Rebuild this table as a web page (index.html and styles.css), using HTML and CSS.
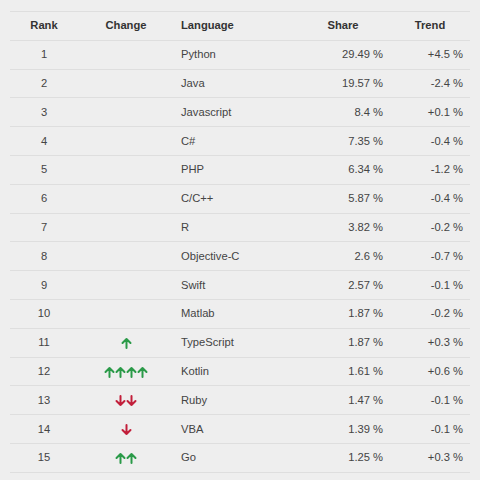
FILE: index.html
```html
<!DOCTYPE html>
<html>
<head>
<meta charset="utf-8">
<link rel="stylesheet" href="styles.css">
</head>
<body>
<svg width="0" height="0" class="defs">
  <defs>
    <g id="up"><path d="M5.5 11V2M1.5 6L5.5 2L9.5 6" fill="none" stroke-width="2" stroke-linecap="round" stroke-linejoin="round"/></g>
    <g id="down"><path d="M5.5 1V10M1.5 6L5.5 10L9.5 6" fill="none" stroke-width="2" stroke-linecap="round" stroke-linejoin="round"/></g>
  </defs>
</svg>
<table class="rank-table">
  <thead>
    <tr><th class="c-rank">Rank</th><th class="c-change">Change</th><th class="c-lang">Language</th><th class="c-share">Share</th><th class="c-trend">Trend</th></tr>
  </thead>
  <tbody>
    <tr><td class="c-rank">1</td><td class="c-change"></td><td class="c-lang">Python</td><td class="c-share">29.49 %</td><td class="c-trend">+4.5 %</td></tr>
    <tr><td class="c-rank">2</td><td class="c-change"></td><td class="c-lang">Java</td><td class="c-share">19.57 %</td><td class="c-trend">-2.4 %</td></tr>
    <tr><td class="c-rank">3</td><td class="c-change"></td><td class="c-lang">Javascript</td><td class="c-share">8.4 %</td><td class="c-trend">+0.1 %</td></tr>
    <tr><td class="c-rank">4</td><td class="c-change"></td><td class="c-lang">C#</td><td class="c-share">7.35 %</td><td class="c-trend">-0.4 %</td></tr>
    <tr><td class="c-rank">5</td><td class="c-change"></td><td class="c-lang">PHP</td><td class="c-share">6.34 %</td><td class="c-trend">-1.2 %</td></tr>
    <tr><td class="c-rank">6</td><td class="c-change"></td><td class="c-lang">C/C++</td><td class="c-share">5.87 %</td><td class="c-trend">-0.4 %</td></tr>
    <tr><td class="c-rank">7</td><td class="c-change"></td><td class="c-lang">R</td><td class="c-share">3.82 %</td><td class="c-trend">-0.2 %</td></tr>
    <tr><td class="c-rank">8</td><td class="c-change"></td><td class="c-lang">Objective-C</td><td class="c-share">2.6 %</td><td class="c-trend">-0.7 %</td></tr>
    <tr><td class="c-rank">9</td><td class="c-change"></td><td class="c-lang">Swift</td><td class="c-share">2.57 %</td><td class="c-trend">-0.1 %</td></tr>
    <tr><td class="c-rank">10</td><td class="c-change"></td><td class="c-lang">Matlab</td><td class="c-share">1.87 %</td><td class="c-trend">-0.2 %</td></tr>
    <tr><td class="c-rank">11</td><td class="c-change"><span class="arrows up"><svg viewBox="0 0 11 12"><use href="#up"/></svg></span></td><td class="c-lang">TypeScript</td><td class="c-share">1.87 %</td><td class="c-trend">+0.3 %</td></tr>
    <tr><td class="c-rank">12</td><td class="c-change"><span class="arrows up"><svg viewBox="0 0 11 12"><use href="#up"/></svg><svg viewBox="0 0 11 12"><use href="#up"/></svg><svg viewBox="0 0 11 12"><use href="#up"/></svg><svg viewBox="0 0 11 12"><use href="#up"/></svg></span></td><td class="c-lang">Kotlin</td><td class="c-share">1.61 %</td><td class="c-trend">+0.6 %</td></tr>
    <tr><td class="c-rank">13</td><td class="c-change"><span class="arrows down"><svg viewBox="0 0 11 12"><use href="#down"/></svg><svg viewBox="0 0 11 12"><use href="#down"/></svg></span></td><td class="c-lang">Ruby</td><td class="c-share">1.47 %</td><td class="c-trend">-0.1 %</td></tr>
    <tr><td class="c-rank">14</td><td class="c-change"><span class="arrows down"><svg viewBox="0 0 11 12"><use href="#down"/></svg></span></td><td class="c-lang">VBA</td><td class="c-share">1.39 %</td><td class="c-trend">-0.1 %</td></tr>
    <tr><td class="c-rank">15</td><td class="c-change"><span class="arrows up"><svg viewBox="0 0 11 12"><use href="#up"/></svg><svg viewBox="0 0 11 12"><use href="#up"/></svg></span></td><td class="c-lang">Go</td><td class="c-share">1.25 %</td><td class="c-trend">+0.3 %</td></tr>
  </tbody>
</table>
</body>
</html>
```
FILE: styles.css
```css
html, body {
  margin: 0;
  padding: 0;
  background: #eeeeee;
}
body {
  padding: 11px 10px 0 10px;
  font-family: "Liberation Sans", Arial, sans-serif;
  font-size: 11.2px;
  color: #444444;
}
.defs {
  position: absolute;
}
.rank-table {
  width: 460px;
  border-collapse: collapse;
  table-layout: fixed;
  border-top: 1px solid #dedede;
}
.rank-table th,
.rank-table td {
  height: 27.8px;
  padding: 0 7px;
  line-height: 15px;
  border-bottom: 1px solid #dedede;
  vertical-align: middle;
  white-space: nowrap;
}
.rank-table th {
  font-weight: bold;
  color: #333333;
  text-align: center;
}
.c-rank { width: 54px; text-align: center; }
.c-change { width: 82px; text-align: center; }
.c-lang { width: 108px; text-align: left; }
.c-share { width: 80px; text-align: right; }
.c-trend { width: 66px; text-align: right; }
.rank-table th.c-lang { text-align: left; }
.arrows {
  display: inline-flex;
  vertical-align: middle;
}
.arrows svg {
  width: 11px;
  height: 12px;
  display: block;
}
.arrows.up svg { stroke: #2a9a48; }
.arrows.down svg { stroke: #c21e3a; }
```
